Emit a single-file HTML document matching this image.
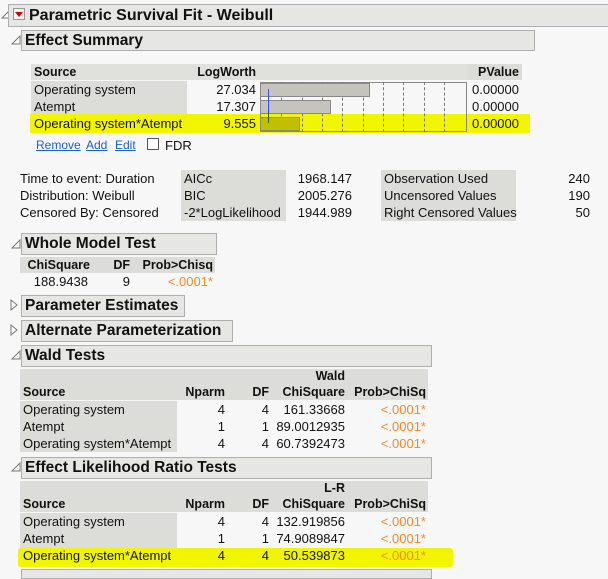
<!DOCTYPE html>
<html><head><meta charset="utf-8"><style>
body{margin:0;width:608px;height:572px;background:#f7f7f7;font-family:"Liberation Sans",sans-serif;font-size:13px;color:#111;position:relative;overflow:hidden}
.a{position:absolute;white-space:nowrap}
.hd{position:absolute;background:#e6e6e4;border:1px solid #aeaeae;font-weight:bold;font-size:15.5px;box-sizing:border-box;padding-left:3px;line-height:19px}
.g{position:absolute;background:#dcdcd8}
.r{text-align:right}
.b{font-weight:bold;font-size:12.5px}
.o{color:#f08a24}
.lk{color:#1a5fd0;text-decoration:underline;font-size:12px}
.dl{position:absolute;top:82px;height:50px;border-left:1px dashed #777}
</style></head><body>
<svg class="a" style="left:1px;top:9px" width="10" height="10"><path d="M1 9 L9 9 L9 1 Z" fill="#fff" stroke="#777"/></svg>
<div class="hd" style="left:8px;top:4px;width:610px;height:23px;font-size:16px;padding-left:20px;line-height:21px">Parametric Survival Fit - Weibull</div>
<div class="a" style="left:13px;top:8px;width:12px;height:12px;background:#f2f2f2;border:1px solid #999;box-sizing:border-box"></div>
<svg class="a" style="left:14px;top:10px" width="10" height="8"><path d="M1 2 L9 2 L5 7 Z" fill="#d40000"/></svg>

<svg class="a" style="left:11px;top:35px" width="10" height="10"><path d="M1 9 L9 9 L9 1 Z" fill="#fff" stroke="#777"/></svg>
<div class="hd" style="left:21px;top:30px;width:514px;height:21px">Effect Summary</div>

<div class="g" style="left:31px;top:64px;width:436px;height:16px;background:#e0e0dc"></div>
<div class="g" style="left:467px;top:64px;width:55px;height:16px"></div>
<div class="g" style="left:31px;top:81px;width:156px;height:51px"></div>
<div class="a b" style="left:34px;top:65px">Source</div>
<div class="a b r" style="left:188px;top:65px;width:68px">LogWorth</div>
<div class="a b r" style="left:467px;top:65px;width:52px">PValue</div>
<div class="a" style="left:30px;top:114px;width:500px;height:19px;background:#f2f500"></div>
<div class="a" style="left:34px;top:82px">Operating system</div>
<div class="a" style="left:34px;top:99px">Atempt</div>
<div class="a" style="left:34px;top:116px">Operating system*Atempt</div>
<div class="a r" style="left:188px;top:82px;width:68px">27.034</div>
<div class="a r" style="left:188px;top:99px;width:68px">17.307</div>
<div class="a r" style="left:188px;top:116px;width:68px">9.555</div>
<div class="a" style="left:472px;top:82px">0.00000</div>
<div class="a" style="left:472px;top:99px">0.00000</div>
<div class="a" style="left:472px;top:116px">0.00000</div>
<div class="a" style="left:260px;top:82px;width:207px;height:50px;border:1px solid #888;box-sizing:border-box"></div>
<div class="dl" style="left:281px"></div><div class="dl" style="left:302px"></div><div class="dl" style="left:322px"></div><div class="dl" style="left:342px"></div><div class="dl" style="left:363px"></div><div class="dl" style="left:383px"></div><div class="dl" style="left:403px"></div><div class="dl" style="left:424px"></div><div class="dl" style="left:444px"></div>
<div class="a" style="left:260px;top:83px;width:110px;height:14px;background:#c4c4bc;border:1px solid #888;box-sizing:border-box"></div>
<div class="a" style="left:260px;top:100px;width:71px;height:14px;background:#c4c4bc;border:1px solid #888;box-sizing:border-box"></div>
<div class="a" style="left:260px;top:117px;width:40px;height:14px;background:#c0c000;border:1px solid #888;box-sizing:border-box"></div>
<div class="a" style="left:268px;top:89px;width:1px;height:22px;background:#3355ff"></div>
<div class="a" style="left:268px;top:111px;width:1px;height:12px;background:#2a6a00"></div>
<div class="a lk" style="left:36px;top:138px">Remove</div>
<div class="a lk" style="left:86px;top:138px">Add</div>
<div class="a lk" style="left:115px;top:138px">Edit</div>
<div class="a" style="left:147px;top:138px;width:12px;height:12px;border:1px solid #555;background:#fff;box-sizing:border-box"></div>
<div class="a" style="left:165px;top:138px">FDR</div>

<div class="a" style="left:20px;top:171px">Time to event: Duration</div>
<div class="a" style="left:20px;top:188px">Distribution: Weibull</div>
<div class="a" style="left:20px;top:205px">Censored By: Censored</div>
<div class="g" style="left:181px;top:170px;width:105px;height:51px"></div>
<div class="a" style="left:184px;top:171px">AICc</div>
<div class="a" style="left:184px;top:188px">BIC</div>
<div class="a" style="left:184px;top:205px">-2*LogLikelihood</div>
<div class="a r" style="left:290px;top:171px;width:62px">1968.147</div>
<div class="a r" style="left:290px;top:188px;width:62px">2005.276</div>
<div class="a r" style="left:290px;top:205px;width:62px">1944.989</div>
<div class="g" style="left:381px;top:170px;width:135px;height:51px"></div>
<div class="a" style="left:384px;top:171px">Observation Used</div>
<div class="a" style="left:384px;top:188px">Uncensored Values</div>
<div class="a" style="left:384px;top:205px">Right Censored Values</div>
<div class="a r" style="left:540px;top:171px;width:50px">240</div>
<div class="a r" style="left:540px;top:188px;width:50px">190</div>
<div class="a r" style="left:540px;top:205px;width:50px">50</div>

<svg class="a" style="left:11px;top:239px" width="10" height="10"><path d="M1 9 L9 9 L9 1 Z" fill="#fff" stroke="#777"/></svg>
<div class="hd" style="left:21px;top:233px;width:196px;height:22px">Whole Model Test</div>
<div class="g" style="left:20px;top:257px;width:195px;height:16px"></div>
<div class="a b r" style="left:20px;top:258px;width:70px">ChiSquare</div>
<div class="a b r" style="left:92px;top:258px;width:38px">DF</div>
<div class="a b r" style="left:134px;top:258px;width:79px">Prob&gt;Chisq</div>
<div class="a r" style="left:20px;top:274px;width:68px">188.9438</div>
<div class="a r" style="left:92px;top:274px;width:38px">9</div>
<div class="a r o" style="left:134px;top:274px;width:79px">&lt;.0001*</div>

<svg class="a" style="left:10px;top:299px" width="8" height="12"><path d="M1 1 L7 6 L1 11 Z" fill="#fff" stroke="#777"/></svg>
<div class="hd" style="left:21px;top:295px;width:164px;height:22px">Parameter Estimates</div>
<svg class="a" style="left:10px;top:324px" width="8" height="12"><path d="M1 1 L7 6 L1 11 Z" fill="#fff" stroke="#777"/></svg>
<div class="hd" style="left:21px;top:320px;width:212px;height:22px">Alternate Parameterization</div>

<svg class="a" style="left:11px;top:350px" width="10" height="10"><path d="M1 9 L9 9 L9 1 Z" fill="#fff" stroke="#777"/></svg>
<div class="hd" style="left:21px;top:345px;width:411px;height:22px">Wald Tests</div>
<div class="g" style="left:20px;top:369px;width:408px;height:31px"></div>
<div class="g" style="left:20px;top:401px;width:157px;height:51px"></div>
<div class="a b" style="left:23px;top:385px">Source</div>
<div class="a b r" style="left:177px;top:385px;width:48px">Nparm</div>
<div class="a b r" style="left:229px;top:385px;width:40px">DF</div>
<div class="a b r" style="left:271px;top:369px;width:74px">Wald</div>
<div class="a b r" style="left:271px;top:385px;width:74px">ChiSquare</div>
<div class="a b r" style="left:348px;top:385px;width:78px">Prob&gt;ChiSq</div>
<div class="a" style="left:23px;top:402px">Operating system</div>
<div class="a" style="left:23px;top:419px">Atempt</div>
<div class="a" style="left:23px;top:436px">Operating system*Atempt</div>
<div class="a r" style="left:177px;top:402px;width:48px">4</div>
<div class="a r" style="left:177px;top:419px;width:48px">1</div>
<div class="a r" style="left:177px;top:436px;width:48px">4</div>
<div class="a r" style="left:229px;top:402px;width:40px">4</div>
<div class="a r" style="left:229px;top:419px;width:40px">1</div>
<div class="a r" style="left:229px;top:436px;width:40px">4</div>
<div class="a r" style="left:271px;top:402px;width:74px">161.33668</div>
<div class="a r" style="left:271px;top:419px;width:74px">89.0012935</div>
<div class="a r" style="left:271px;top:436px;width:74px">60.7392473</div>
<div class="a r o" style="left:348px;top:402px;width:78px">&lt;.0001*</div>
<div class="a r o" style="left:348px;top:419px;width:78px">&lt;.0001*</div>
<div class="a r o" style="left:348px;top:436px;width:78px">&lt;.0001*</div>

<svg class="a" style="left:11px;top:462px" width="10" height="10"><path d="M1 9 L9 9 L9 1 Z" fill="#fff" stroke="#777"/></svg>
<div class="hd" style="left:21px;top:457px;width:411px;height:22px">Effect Likelihood Ratio Tests</div>
<div class="g" style="left:20px;top:481px;width:408px;height:31px"></div>
<div class="g" style="left:20px;top:513px;width:157px;height:51px"></div>
<div class="a" style="left:18px;top:548px;width:435px;height:19px;background:#f2f500;border-radius:3px"></div>
<div class="a b" style="left:23px;top:497px">Source</div>
<div class="a b r" style="left:177px;top:497px;width:48px">Nparm</div>
<div class="a b r" style="left:229px;top:497px;width:40px">DF</div>
<div class="a b r" style="left:271px;top:481px;width:74px">L-R</div>
<div class="a b r" style="left:271px;top:497px;width:74px">ChiSquare</div>
<div class="a b r" style="left:348px;top:497px;width:78px">Prob&gt;ChiSq</div>
<div class="a" style="left:23px;top:514px">Operating system</div>
<div class="a" style="left:23px;top:531px">Atempt</div>
<div class="a" style="left:23px;top:548px">Operating system*Atempt</div>
<div class="a r" style="left:177px;top:514px;width:48px">4</div>
<div class="a r" style="left:177px;top:531px;width:48px">1</div>
<div class="a r" style="left:177px;top:548px;width:48px">4</div>
<div class="a r" style="left:229px;top:514px;width:40px">4</div>
<div class="a r" style="left:229px;top:531px;width:40px">1</div>
<div class="a r" style="left:229px;top:548px;width:40px">4</div>
<div class="a r" style="left:271px;top:514px;width:74px">132.919856</div>
<div class="a r" style="left:271px;top:531px;width:74px">74.9089847</div>
<div class="a r" style="left:271px;top:548px;width:74px">50.539873</div>
<div class="a r o" style="left:348px;top:514px;width:78px">&lt;.0001*</div>
<div class="a r o" style="left:348px;top:531px;width:78px">&lt;.0001*</div>
<div class="a r o" style="left:348px;top:548px;width:78px">&lt;.0001*</div>
<div class="hd" style="left:21px;top:569px;width:411px;height:10px"></div>
</body></html>
